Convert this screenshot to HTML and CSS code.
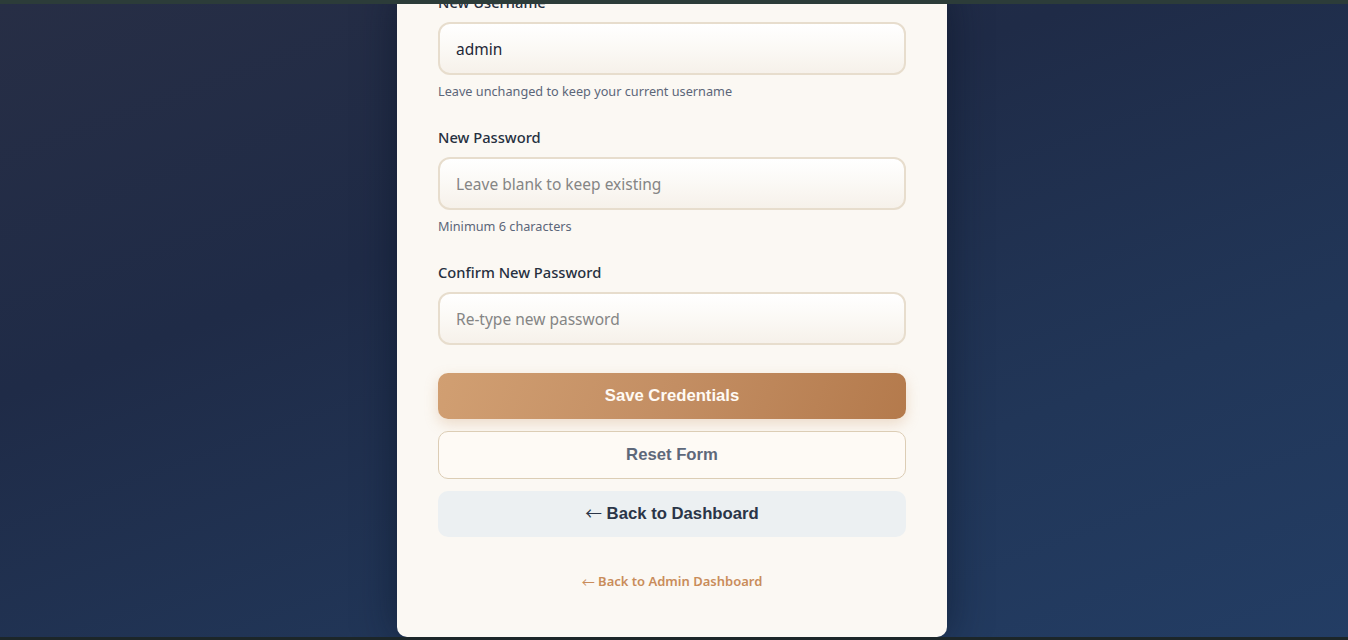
FILE: index.html
```html
<!DOCTYPE html>
<html lang="en">
<head>
<meta charset="utf-8">
<title>Admin Credentials</title>
<link rel="stylesheet" href="styles.css">
</head>
<body>
<div class="top-strip"></div>
<main class="stage">
  <section class="card">
    <form class="form">
      <div class="field">
        <label class="label" for="username">New Username</label>
        <input class="input" id="username" type="text" value="admin">
        <p class="hint">Leave unchanged to keep your current username</p>
      </div>
      <div class="field">
        <label class="label" for="password">New Password</label>
        <input class="input" id="password" type="password" placeholder="Leave blank to keep existing">
        <p class="hint">Minimum 6 characters</p>
      </div>
      <div class="field field-last">
        <label class="label" for="confirm">Confirm New Password</label>
        <input class="input" id="confirm" type="password" placeholder="Re-type new password">
      </div>
      <div class="actions">
        <button type="button" class="btn btn-save">Save Credentials</button>
        <button type="button" class="btn btn-reset">Reset Form</button>
        <button type="button" class="btn btn-back"><span class="arrow">←</span> Back to Dashboard</button>
      </div>
    </form>
    <div class="footer-link"><a href="#"><span class="arrow">←</span> Back to Admin Dashboard</a></div>
  </section>
</main>
<div class="bottom-strip"></div>
</body>
</html>
```

FILE: styles.css
```css
* { box-sizing: border-box; }
html, body { margin: 0; padding: 0; height: 640px; overflow: hidden; }
body {
  background: linear-gradient(160deg, #272e45 0%, #1f2b47 35%, #213658 70%, #233d64 100%);
  font-family: "Noto Sans", "Open Sans", sans-serif;
  display: flex;
  flex-direction: column;
}
.top-strip { height: 4px; background: #2c3c39; flex: none; }
.bottom-strip { height: 3px; background: #1c2629; flex: none; }
.stage {
  flex: 1;
  display: flex;
  justify-content: center;
  align-items: flex-end;
  padding-right: 4px;
  overflow: hidden;
}
.card {
  width: 550px;
  background: #fbf8f3;
  border-radius: 0 0 10px 10px;
  padding: 0 41px 47px;
  box-shadow: 0 0 40px rgba(10, 18, 35, 0.55);
}
.form { display: flex; flex-direction: column; }
.field { margin-bottom: 26px; }
.field-last { margin-bottom: 28px; }
.label {
  display: block;
  font-size: 14.7px;
  line-height: 20px;
  font-weight: 500;
  color: #26303f;
  margin-bottom: 10px;
}
.input {
  display: block;
  width: 100%;
  height: 53px;
  border: 2px solid #e7ddcd;
  border-radius: 12px;
  background: linear-gradient(180deg, #ffffff 0%, #fbf9f5 50%, #f6f1ea 100%);
  padding: 0 16px;
  font-family: "Noto Sans", "Open Sans", sans-serif;
  font-size: 15.5px;
  color: #1f2737;
  outline: none;
}
.input::placeholder { color: #858585; }
.hint {
  margin: 7px 0 0;
  font-size: 12.7px;
  line-height: 19px;
  color: #5c6679;
}
.actions { display: flex; flex-direction: column; gap: 12px; }
.btn {
  display: block;
  width: 100%;
  border-radius: 10px;
  font-family: "Liberation Sans", Arial, sans-serif;
  font-weight: 700;
  cursor: pointer;
}
.arrow {
  font-family: "Noto Sans CJK JP", "DejaVu Sans", sans-serif;
  font-weight: 400;
  line-height: 0;
  vertical-align: -1px;
}
.btn-save {
  height: 46px;
  border: none;
  background: linear-gradient(110deg, #d19f72 0%, #c38e63 50%, #b47a4c 100%);
  color: #fffaf4;
  font-size: 16.7px;
  box-shadow: 0 5px 14px rgba(200, 145, 95, 0.28);
}
.btn-reset {
  height: 48px;
  border: 1px solid #dccdb5;
  background: #fefaf5;
  color: #5e687a;
  font-size: 16.7px;
}
.btn-back {
  height: 46px;
  border: none;
  background: #ecf0f2;
  color: #2a3548;
  font-size: 16.7px;
}
.footer-link {
  margin-top: 35px;
  text-align: center;
  font-size: 13px;
  line-height: 18px;
}
.footer-link a {
  color: #c98c5a;
  font-weight: 600;
  text-decoration: none;
}
```
